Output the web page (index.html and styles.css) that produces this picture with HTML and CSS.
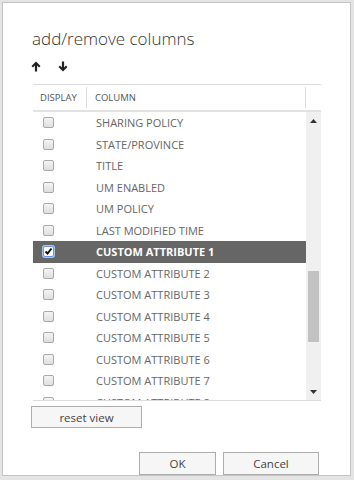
FILE: index.html
```html
<!DOCTYPE html>
<html lang="en">
<head>
    <meta charset="UTF-8" />
    <title>add/remove columns</title>
    <link rel="stylesheet" href="styles.css">
</head>
<body>
    <div class="dialog">
        <h1 class="title">add/remove columns</h1>

        <div class="arrows">
            <svg width="10" height="11" viewBox="0 0 10 11"><path d="M5 0.5 L9.5 5 L8 6.5 L6.1 4.6 L6.1 10.5 L3.9 10.5 L3.9 4.6 L2 6.5 L0.5 5 Z" fill="#222"/></svg>
            <svg width="10" height="11" viewBox="0 0 10 11"><path d="M5 10.5 L9.5 6 L8 4.5 L6.1 6.4 L6.1 0.5 L3.9 0.5 L3.9 6.4 L2 4.5 L0.5 6 Z" fill="#222"/></svg>
        </div>

        <div class="grid">
            <div class="grid-head">
                <div class="col-display">DISPLAY</div>
                <div class="col-name">COLUMN</div>
                <div class="col-pad"></div>
            </div>
            <div class="grid-body">
                <div class="rows">
                    <div class="row"><span class="check"></span><span class="name">SHARING POLICY</span></div>
                    <div class="row"><span class="check"></span><span class="name">STATE/PROVINCE</span></div>
                    <div class="row"><span class="check"></span><span class="name">TITLE</span></div>
                    <div class="row"><span class="check"></span><span class="name">UM ENABLED</span></div>
                    <div class="row"><span class="check"></span><span class="name">UM POLICY</span></div>
                    <div class="row"><span class="check"></span><span class="name">LAST MODIFIED TIME</span></div>
                    <div class="row selected"><span class="check checked">
                        <svg width="9" height="9" viewBox="0 0 9 9"><path d="M1.5 4.5 L3.5 6.5 L7.5 1.5" stroke="#111" stroke-width="2" fill="none"/></svg>
                    </span><span class="name">CUSTOM ATTRIBUTE 1</span></div>
                    <div class="row"><span class="check"></span><span class="name">CUSTOM ATTRIBUTE 2</span></div>
                    <div class="row"><span class="check"></span><span class="name">CUSTOM ATTRIBUTE 3</span></div>
                    <div class="row"><span class="check"></span><span class="name">CUSTOM ATTRIBUTE 4</span></div>
                    <div class="row"><span class="check"></span><span class="name">CUSTOM ATTRIBUTE 5</span></div>
                    <div class="row"><span class="check"></span><span class="name">CUSTOM ATTRIBUTE 6</span></div>
                    <div class="row"><span class="check"></span><span class="name">CUSTOM ATTRIBUTE 7</span></div>
                    <div class="row"><span class="check"></span><span class="name">CUSTOM ATTRIBUTE 8</span></div>
                </div>
                <div class="scrollbar">
                    <div class="scroll-btn">
                        <svg width="7" height="4" viewBox="0 0 7 4"><path d="M0 4 L3.5 0 L7 4 Z" fill="#333"/></svg>
                    </div>
                    <div class="track">
                        <div class="thumb"></div>
                    </div>
                    <div class="scroll-btn">
                        <svg width="7" height="4" viewBox="0 0 7 4"><path d="M0 0 L3.5 4 L7 0 Z" fill="#333"/></svg>
                    </div>
                </div>
            </div>
        </div>

        <button class="btn reset">reset view</button>

        <div class="footer">
            <button class="btn ok">OK</button>
            <button class="btn cancel">Cancel</button>
        </div>
    </div>
</body>
</html>
```

FILE: styles.css
```css
body {
    margin: 0;
    padding: 1px;
    background-color: #e4e4e4;
    font-family: 'Open Sans', 'Liberation Sans', sans-serif;
    color: #444;
}

.dialog {
    width: 349px;
    height: 474px;
    box-sizing: border-box;
    margin: 1px;
    background: white;
    border: 1px solid #c4c4c4;
    padding: 0 30px 0 30px;
    display: flex;
    flex-direction: column;
}

.title {
    font-size: 17px;
    font-weight: 300;
    color: #333;
    margin: 24px 0 0 -1px;
    line-height: 24px;
}

.arrows {
    display: flex;
    gap: 17px;
    margin: 10px 0 0 -2px;
    height: 11px;
}

.arrows svg {
    display: block;
}

.grid {
    margin-top: 12px;
    width: 288px;
    border-top: 1px solid #dcdcdc;
}

.grid-head {
    display: flex;
    height: 25px;
    align-items: center;
    border-bottom: 2px solid #e2e2e2;
    font-size: 9.5px;
    color: #555;
}

.col-display {
    width: 54px;
    box-sizing: border-box;
    padding-left: 7px;
    border-right: 1px solid #dcdcdc;
    height: 21px;
    line-height: 21px;
}

.col-name {
    flex: 1;
    padding-left: 8px;
    border-right: 1px solid #dcdcdc;
    height: 21px;
    line-height: 21px;
}

.col-pad {
    width: 15px;
}

.grid-body {
    display: flex;
    height: 288px;
    border-bottom: 1px solid #dcdcdc;
}

.rows {
    flex: 1;
    overflow: hidden;
}

.row {
    display: flex;
    align-items: center;
    height: 21.5px;
    font-size: 11px;
    color: #666;
}

.row.selected {
    background-color: #666;
    color: white;
    font-weight: bold;
}

.check {
    width: 11px;
    height: 11px;
    box-sizing: border-box;
    margin-left: 10px;
    margin-right: 42px;
    border: 1px solid #a9a9a9;
    border-radius: 2px;
    background: linear-gradient(#f4f4f4, #dedede);
    display: flex;
    align-items: center;
    justify-content: center;
}

.check.checked {
    border-color: #6a94e0;
    background: white;
    box-shadow: 0 0 0 1px #a9c3f0;
}

.scrollbar {
    width: 15px;
    background-color: #f0f0f0;
    display: flex;
    flex-direction: column;
}

.scroll-btn {
    height: 17px;
    display: flex;
    align-items: center;
    justify-content: center;
}

.track {
    flex: 1;
    padding: 142px 2px 0 2px;
}

.thumb {
    height: 71px;
    background-color: #c2c2c2;
}

.btn {
    font-family: 'Open Sans', 'Liberation Sans', sans-serif;
    font-size: 11.5px;
    color: #444;
    background-color: #f6f6f6;
    border: 1px solid #adadad;
    height: 23px;
    padding: 0;
}

.reset {
    width: 111px;
    margin: 5px 0 0 -2px;
}

.footer {
    display: flex;
    justify-content: flex-end;
    gap: 7px;
    margin-top: 24px;
    padding-right: 1px;
}

.ok {
    width: 77px;
}

.cancel {
    width: 96px;
}
```
